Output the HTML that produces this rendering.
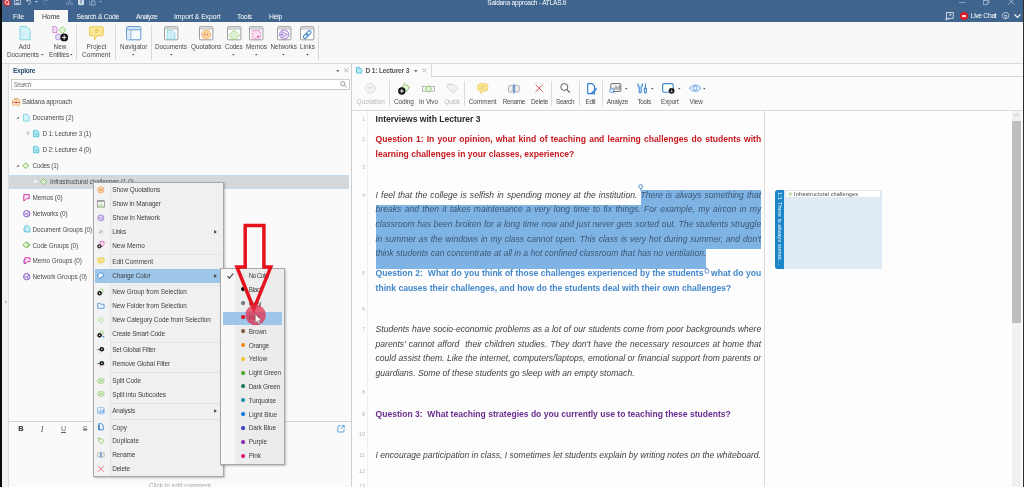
<!DOCTYPE html>
<html><head><meta charset="utf-8"><title>Saldana approach - ATLAS.ti</title>
<style>
html,body{margin:0;padding:0;width:1024px;height:487px;overflow:hidden;}
body{width:1024px;height:487px;overflow:hidden;position:relative;background:#f8f8f8;font-family:"Liberation Sans",sans-serif;font-size:7px;color:#444;}
.a{position:absolute;}
.t{position:absolute;white-space:nowrap;}
.d{position:absolute;left:375.6px;width:385.6px;white-space:nowrap;font-size:8.55px;line-height:12px;height:12px;text-align:justify;text-align-last:justify;color:#333;}
.d.l{text-align:left;text-align-last:left;}
.b{font-weight:bold;}
.i{font-style:italic;}
svg{position:absolute;overflow:visible;}
#root{position:absolute;left:0;top:0;width:1024px;height:487px;filter:blur(0.6px);will-change:transform;}
#clip{position:absolute;left:0;top:0;width:1024px;height:487px;overflow:hidden;}
</style></head><body><div id="clip"><div id="root">
<div class="a" style="left:-6px;top:-6px;width:1036px;height:28.2px;background:#3f648d;"></div>
<div class="a" style="left:34px;top:10px;width:34px;height:13px;background:#f8f8f8;"></div>
<div class="a" style="left:-6px;top:22.2px;width:1036px;height:40.8px;background:#f8f8f8;"></div>
<div class="a" style="left:-6px;top:62.5px;width:1036px;height:1px;background:#d9d9d9;"></div>
<div class="t" style="top:11.7px;font-size:6.8px;line-height:10px;color:#fff;letter-spacing:0.011px;left:13.0px;">File</div>
<div class="t" style="top:11.7px;font-size:6.8px;line-height:10px;color:#333;letter-spacing:-0.034px;left:42.0px;">Home</div>
<div class="t" style="top:11.7px;font-size:6.8px;line-height:10px;color:#fff;letter-spacing:-0.278px;left:76.5px;">Search &amp; Code</div>
<div class="t" style="top:11.7px;font-size:6.8px;line-height:10px;color:#fff;letter-spacing:-0.384px;left:136.0px;">Analyze</div>
<div class="t" style="top:11.7px;font-size:6.8px;line-height:10px;color:#fff;letter-spacing:-0.049px;left:174.0px;">Import &amp; Export</div>
<div class="t" style="top:11.7px;font-size:6.8px;line-height:10px;color:#fff;letter-spacing:-0.175px;left:237.0px;">Tools</div>
<div class="t" style="top:11.7px;font-size:6.8px;line-height:10px;color:#fff;letter-spacing:-0.246px;left:269.0px;">Help</div>
<div class="t" style="top:-2.0px;font-size:6.6px;line-height:10px;color:#fff;letter-spacing:-0.219px;left:487.3px;">Saldana approach - ATLAS.ti</div>
<div class="t" style="top:11.4px;font-size:6.8px;line-height:10px;color:#fff;letter-spacing:-0.336px;left:970.7px;">Live Chat</div>
<div class="a" style="left:76px;top:25px;width:1px;height:35px;background:#d9d9dc;"></div>
<div class="a" style="left:115px;top:25px;width:1px;height:35px;background:#d9d9dc;"></div>
<div class="a" style="left:151px;top:25px;width:1px;height:35px;background:#d9d9dc;"></div>
<div class="a" style="left:318px;top:25px;width:1px;height:35px;background:#d9d9dc;"></div>
<div class="t" style="top:41.7px;font-size:6.4px;line-height:10px;color:#4c4c4c;left:18.8px;">Add</div>
<div class="t" style="top:49.7px;font-size:6.4px;line-height:10px;color:#4c4c4c;letter-spacing:-0.041px;left:7.0px;">Documents</div>
<div class="t" style="top:41.7px;font-size:6.4px;line-height:10px;color:#4c4c4c;left:53.6px;">New</div>
<div class="t" style="top:49.7px;font-size:6.4px;line-height:10px;color:#4c4c4c;letter-spacing:-0.123px;left:49.0px;">Entities</div>
<div class="t" style="top:41.7px;font-size:6.4px;line-height:10px;color:#4c4c4c;left:86.5px;">Project</div>
<div class="t" style="top:49.7px;font-size:6.4px;line-height:10px;color:#4c4c4c;letter-spacing:0.109px;left:82.0px;">Comment</div>
<div class="t" style="top:41.7px;font-size:6.4px;line-height:10px;color:#4c4c4c;letter-spacing:0.012px;left:120.0px;">Navigator</div>
<div class="t" style="top:41.7px;font-size:6.4px;line-height:10px;color:#4c4c4c;letter-spacing:-0.041px;left:155.0px;">Documents</div>
<div class="t" style="top:41.7px;font-size:6.4px;line-height:10px;color:#4c4c4c;letter-spacing:-0.045px;left:191.0px;">Quotations</div>
<div class="t" style="top:41.7px;font-size:6.4px;line-height:10px;color:#4c4c4c;letter-spacing:-0.200px;left:225.0px;">Codes</div>
<div class="t" style="top:41.7px;font-size:6.4px;line-height:10px;color:#4c4c4c;letter-spacing:0.004px;left:246.0px;">Memos</div>
<div class="t" style="top:41.7px;font-size:6.4px;line-height:10px;color:#4c4c4c;letter-spacing:-0.021px;left:270.5px;">Networks</div>
<div class="t" style="top:41.7px;font-size:6.4px;line-height:10px;color:#4c4c4c;letter-spacing:0.012px;left:300.0px;">Links</div>
<div class="a" style="left:8px;top:63.5px;width:1px;height:430px;background:#dedede;"></div>
<div class="a" style="left:9px;top:63.5px;width:342px;height:430px;background:#fafafa;"></div>
<div class="t" style="top:66.0px;font-size:6.6px;line-height:10px;color:#2c4a75;font-weight:bold;letter-spacing:-0.315px;left:13.0px;">Explore</div>
<div class="a" style="left:10.5px;top:78.8px;width:339px;height:11px;background:#ffffff;border:1px solid #cdcdcd;box-sizing:border-box;"></div>
<div class="t" style="top:79.8px;font-size:6.4px;line-height:10px;color:#777;font-style:italic;letter-spacing:-0.463px;left:13.5px;">Search</div>
<div class="t" style="top:96.7px;font-size:6.4px;line-height:10px;color:#4c4c4c;letter-spacing:-0.122px;left:22.0px;">Saldana approach</div>
<div class="t" style="top:112.9px;font-size:6.4px;line-height:10px;color:#4c4c4c;letter-spacing:-0.074px;left:32.5px;">Documents (2)</div>
<div class="t" style="top:128.8px;font-size:6.4px;line-height:10px;color:#4c4c4c;letter-spacing:-0.180px;left:42.5px;">D 1: Lecturer 3 (1)</div>
<div class="t" style="top:144.9px;font-size:6.4px;line-height:10px;color:#4c4c4c;letter-spacing:-0.180px;left:42.5px;">D 2: Lecturer 4 (0)</div>
<div class="t" style="top:160.7px;font-size:6.4px;line-height:10px;color:#4c4c4c;letter-spacing:-0.233px;left:32.5px;">Codes (1)</div>
<div class="a" style="left:9px;top:174.5px;width:340px;height:14px;background:#d5d8db;border-top:1px solid #c4dcee;border-bottom:1px solid #c4dcee;box-sizing:border-box;"></div>
<div class="t" style="top:176.9px;font-size:6.4px;line-height:10px;color:#4c4c4c;letter-spacing:-0.087px;left:50.0px;">Infrastructural challenges (1-0)</div>
<div class="t" style="top:192.7px;font-size:6.4px;line-height:10px;color:#4c4c4c;letter-spacing:-0.064px;left:32.5px;">Memos (0)</div>
<div class="t" style="top:208.6px;font-size:6.4px;line-height:10px;color:#4c4c4c;letter-spacing:-0.106px;left:32.5px;">Networks (0)</div>
<div class="t" style="top:224.6px;font-size:6.4px;line-height:10px;color:#4c4c4c;letter-spacing:-0.107px;left:32.5px;">Document Groups (0)</div>
<div class="t" style="top:240.5px;font-size:6.4px;line-height:10px;color:#4c4c4c;letter-spacing:-0.144px;left:32.5px;">Code Groups (0)</div>
<div class="t" style="top:256.4px;font-size:6.4px;line-height:10px;color:#4c4c4c;letter-spacing:-0.043px;left:32.5px;">Memo Groups (0)</div>
<div class="t" style="top:272.4px;font-size:6.4px;line-height:10px;color:#4c4c4c;letter-spacing:-0.074px;left:32.5px;">Network Groups (0)</div>
<div class="a" style="left:9px;top:421px;width:342px;height:1px;background:#d4d4d4;"></div>
<div class="t" style="top:423.7px;font-size:7.5px;line-height:10px;color:#333;font-weight:bold;left:18.3px;">B</div>
<div class="t" style="top:423.7px;font-size:8.5px;line-height:10px;color:#555;font-style:italic;left:40.8px;font-family:'Liberation Serif',serif;">I</div>
<div class="t" style="top:423.7px;font-size:7px;line-height:10px;color:#666;left:61.0px;text-decoration:underline;">U</div>
<div class="t" style="top:423.7px;font-size:7px;line-height:10px;color:#777;left:82.7px;text-decoration:line-through;">S</div>
<div class="t" style="top:481.0px;font-size:6.4px;line-height:10px;color:#aaa;letter-spacing:0.049px;left:148.8px;">Click to edit comment</div>
<div class="a" style="left:351px;top:63.5px;width:1px;height:430px;background:#cfcfcf;"></div>
<div class="a" style="left:352px;top:63.5px;width:678px;height:430px;background:#fbfbfb;"></div>
<div class="a" style="left:352px;top:76px;width:678px;height:1px;background:#d9d9d9;"></div>
<div class="a" style="left:352px;top:63.5px;width:79px;height:13.5px;background:#fbfbfb;border-right:1px solid #d9d9d9;"></div>
<div class="t" style="top:65.8px;font-size:6.6px;line-height:10px;color:#555;font-weight:bold;letter-spacing:-0.168px;left:365.5px;">D 1: Lecturer 3</div>
<div class="a" style="left:352px;top:109.5px;width:678px;height:1px;background:#dcdcdc;"></div>
<div class="a" style="left:389px;top:81px;width:1px;height:25px;background:#d9dae0;"></div>
<div class="a" style="left:464px;top:81px;width:1px;height:25px;background:#d9dae0;"></div>
<div class="a" style="left:551px;top:81px;width:1px;height:25px;background:#d9dae0;"></div>
<div class="a" style="left:578.5px;top:81px;width:1px;height:25px;background:#d9dae0;"></div>
<div class="a" style="left:602px;top:81px;width:1px;height:25px;background:#d9dae0;"></div>
<div class="t" style="top:96.5px;font-size:6.4px;line-height:10px;color:#b9b9b9;letter-spacing:0.072px;left:356.6px;">Quotation</div>
<div class="t" style="top:96.5px;font-size:6.4px;line-height:10px;color:#4c4c4c;letter-spacing:-0.097px;left:394.0px;">Coding</div>
<div class="t" style="top:96.5px;font-size:6.4px;line-height:10px;color:#4c4c4c;letter-spacing:-0.064px;left:419.0px;">In Vivo</div>
<div class="t" style="top:96.5px;font-size:6.4px;line-height:10px;color:#b9b9b9;letter-spacing:-0.152px;left:444.2px;">Quick</div>
<div class="t" style="top:96.5px;font-size:6.4px;line-height:10px;color:#4c4c4c;letter-spacing:0.037px;left:468.7px;">Comment</div>
<div class="t" style="top:96.5px;font-size:6.4px;line-height:10px;color:#4c4c4c;letter-spacing:-0.315px;left:502.7px;">Rename</div>
<div class="t" style="top:96.5px;font-size:6.4px;line-height:10px;color:#4c4c4c;letter-spacing:-0.250px;left:531.0px;">Delete</div>
<div class="t" style="top:96.5px;font-size:6.4px;line-height:10px;color:#4c4c4c;letter-spacing:-0.346px;left:556.0px;">Search</div>
<div class="t" style="top:96.5px;font-size:6.4px;line-height:10px;color:#4c4c4c;letter-spacing:-0.257px;left:585.4px;">Edit</div>
<div class="t" style="top:96.5px;font-size:6.4px;line-height:10px;color:#4c4c4c;letter-spacing:-0.195px;left:606.8px;">Analyze</div>
<div class="t" style="top:96.5px;font-size:6.4px;line-height:10px;color:#4c4c4c;letter-spacing:-0.268px;left:637.4px;">Tools</div>
<div class="t" style="top:96.5px;font-size:6.4px;line-height:10px;color:#4c4c4c;letter-spacing:-0.116px;left:661.0px;">Export</div>
<div class="t" style="top:96.5px;font-size:6.4px;line-height:10px;color:#4c4c4c;letter-spacing:-0.164px;left:689.6px;">View</div>
<div class="a" style="left:352px;top:110.5px;width:660px;height:383px;background:#fdfdfd;"></div>
<div class="a" style="left:367px;top:110.5px;width:1px;height:383px;background:#efefef;"></div>
<div class="a" style="left:764px;top:110.5px;width:1px;height:383px;background:#dcdcdc;"></div>
<div class="a" style="left:640.6px;top:190px;width:120.7px;height:15px;background:#7fb3e3;"></div>
<div class="a" style="left:375.5px;top:204.7px;width:385.8px;height:44.4px;background:#7fb3e3;"></div>
<div class="a" style="left:375.5px;top:248.8px;width:330.8px;height:20.3px;background:#7fb3e3;"></div>
<div class="t" style="top:114.4px;font-size:5.6px;line-height:10px;color:#b8b8b8;left:0.0px;left:auto;right:659px;">1</div>
<div class="d b l" style="top:113.0px;color:#2a2a2a;">Interviews with Lecturer 3</div>
<div class="t" style="top:134.4px;font-size:5.6px;line-height:10px;color:#b8b8b8;left:0.0px;left:auto;right:659px;">2</div>
<div class="d b" style="top:133.0px;color:#c8161f;">Question 1: In your opinion, what kind of teaching and learning challenges do students with</div>
<div class="d b l" style="top:147.8px;color:#c8161f;">learning challenges in your classes, experience?</div>
<div class="t" style="top:162.4px;font-size:5.6px;line-height:10px;color:#b8b8b8;left:0.0px;left:auto;right:659px;">3</div>
<div class="t" style="top:189.9px;font-size:5.6px;line-height:10px;color:#b8b8b8;left:0.0px;left:auto;right:659px;">4</div>
<div class="d i" style="top:188.5px;color:#424242;">I feel that the college is selfish in spending money at the institution. <span style="color:#3c5876">There is always something that</span></div>
<div class="d i" style="top:203.2px;color:#3c5876;">breaks and then it takes maintenance a very long time to fix things. For example, my aircon in my</div>
<div class="d i" style="top:218.0px;color:#3c5876;">classroom has been broken for a long time now and just never gets sorted out. The students struggle</div>
<div class="d i" style="top:232.7px;color:#3c5876;">in summer as the windows in my class cannot open. This class is very hot during summer, and don&#39;t</div>
<div class="d i l" style="top:247.4px;color:#3c5876;">think students can concentrate at all in a hot confined classroom that has no ventilation.</div>
<div class="t" style="top:268.4px;font-size:5.6px;line-height:10px;color:#b8b8b8;left:0.0px;left:auto;right:659px;">5</div>
<div class="d b" style="top:267.0px;color:#4288cc;">Question 2: &nbsp;What do you think of those challenges experienced by the students &nbsp;&nbsp;what do you</div>
<div class="d b l" style="top:281.7px;color:#4288cc;">think causes their challenges, and how do the students deal with their own challenges?</div>
<div class="t" style="top:304.4px;font-size:5.6px;line-height:10px;color:#b8b8b8;left:0.0px;left:auto;right:659px;">6</div>
<div class="t" style="top:324.4px;font-size:5.6px;line-height:10px;color:#b8b8b8;left:0.0px;left:auto;right:659px;">7</div>
<div class="d i" style="top:323.0px;color:#424242;">Students have socio-economic problems as a lot of our students come from poor backgrounds where</div>
<div class="d i" style="top:337.8px;color:#424242;">parents&#39; cannot afford &nbsp;their children studies. They don&#39;t have the necessary resources at home that</div>
<div class="d i" style="top:352.2px;color:#424242;">could assist them. Like the internet, computers/laptops, emotional or financial support from parents or</div>
<div class="d i l" style="top:366.8px;color:#424242;">guardians. Some of these students go sleep with an empty stomach.</div>
<div class="t" style="top:387.4px;font-size:5.6px;line-height:10px;color:#b8b8b8;left:0.0px;left:auto;right:659px;">8</div>
<div class="t" style="top:408.9px;font-size:5.6px;line-height:10px;color:#b8b8b8;left:0.0px;left:auto;right:659px;">9</div>
<div class="d b l" style="top:407.5px;color:#6b2d90;">Question 3: &nbsp;What teaching strategies do you currently use to teaching these students?</div>
<div class="t" style="top:429.0px;font-size:5.6px;line-height:10px;color:#b8b8b8;left:0.0px;left:auto;right:659px;">10</div>
<div class="t" style="top:450.0px;font-size:5.6px;line-height:10px;color:#b8b8b8;left:0.0px;left:auto;right:659px;">11</div>
<div class="d i l" style="top:448.6px;color:#424242;">I encourage participation in class, I sometimes let students explain by writing notes on the whiteboard.</div>
<div class="t" style="top:466.0px;font-size:5.6px;line-height:10px;color:#b8b8b8;left:0.0px;left:auto;right:659px;">12</div>
<div class="t" style="top:481.4px;font-size:5.6px;line-height:10px;color:#b8b8b8;left:0.0px;left:auto;right:659px;">13</div>
<div class="a" style="left:774.6px;top:189.5px;width:9px;height:79.5px;background:#1c86c9;border-radius:2.5px 0 0 2.5px;"></div>
<div class="a" style="left:783.5px;top:189.5px;width:98.5px;height:79.5px;background:#dfeaf5;"></div>
<div class="a" style="left:785px;top:190.3px;width:95.5px;height:8px;background:#ffffff;border:0.5px solid #e2e6ea;box-sizing:border-box;"></div>
<div class="t" style="top:189.2px;font-size:5.5px;line-height:10px;color:#444;letter-spacing:0.098px;left:794.0px;">Infrastructural challenges</div>
<div class="t" style="left:774.8px;top:192.4px;width:76px;height:8.6px;font-size:6.0px;line-height:8.6px;color:#f4f9fd;transform-origin:0 0;transform:rotate(90deg) translate(0,-8.6px);letter-spacing:-0.080px;">1:1 There is always somet…</div>
<div class="a" style="left:1012px;top:110.5px;width:10.8px;height:383px;background:#fdfdfd;"></div>
<div class="a" style="left:1012px;top:110.5px;width:8.6px;height:383px;background:#f1f1f1;"></div>
<div class="a" style="left:1012px;top:120.5px;width:8.6px;height:202.3px;background:#bebebe;"></div>
<div class="a" style="left:1022.8px;top:-6px;width:7.2px;height:499px;background:#2e2e2e;"></div>
<div class="a" style="left:-6px;top:-6px;width:8.2px;height:499px;background:#0d0d0d;"></div>
<div class="a" style="left:2.2px;top:63.5px;width:6px;height:430px;background:#f3f3f3;"></div>
<div class="a" style="left:93px;top:182.4px;width:131px;height:294.6px;background:#f0f0f0;border:1px solid #a8a8a8;box-sizing:border-box;box-shadow:1px 1px 2px rgba(0,0,0,0.25);"></div>
<div class="a" style="left:94px;top:183.4px;width:15.5px;height:292.6px;background:#f3f3f3;border-right:1px solid #e4e4e4;"></div>
<div class="a" style="left:94.8px;top:268.8px;width:125px;height:13.8px;background:#9dc6ea;"></div>
<div class="a" style="left:111px;top:253.5px;width:110px;height:1px;background:#e4e4e4;"></div>
<div class="a" style="left:111px;top:285px;width:110px;height:1px;background:#e4e4e4;"></div>
<div class="a" style="left:111px;top:342px;width:110px;height:1px;background:#e4e4e4;"></div>
<div class="a" style="left:111px;top:371.8px;width:110px;height:1px;background:#e4e4e4;"></div>
<div class="a" style="left:111px;top:402.7px;width:110px;height:1px;background:#e4e4e4;"></div>
<div class="a" style="left:111px;top:419px;width:110px;height:1px;background:#e4e4e4;"></div>
<div class="t" style="top:185.4px;font-size:6.4px;line-height:10px;color:#404040;letter-spacing:-0.049px;left:112.2px;">Show Quotations</div>
<div class="t" style="top:198.9px;font-size:6.4px;line-height:10px;color:#404040;letter-spacing:-0.067px;left:112.2px;">Show in Manager</div>
<div class="t" style="top:213.0px;font-size:6.4px;line-height:10px;color:#404040;letter-spacing:-0.014px;left:112.2px;">Show in Network</div>
<div class="t" style="top:226.9px;font-size:6.4px;line-height:10px;color:#404040;letter-spacing:-0.228px;left:112.2px;">Links</div>
<div class="t" style="top:240.7px;font-size:6.4px;line-height:10px;color:#404040;letter-spacing:0.055px;left:112.2px;">New Memo</div>
<div class="t" style="top:256.7px;font-size:6.4px;line-height:10px;color:#404040;letter-spacing:0.021px;left:112.2px;">Edit Comment</div>
<div class="t" style="top:270.9px;font-size:6.4px;line-height:10px;color:#404040;letter-spacing:-0.099px;left:112.2px;">Change Color</div>
<div class="t" style="top:287.4px;font-size:6.4px;line-height:10px;color:#404040;letter-spacing:-0.010px;left:112.2px;">New Group from Selection</div>
<div class="t" style="top:301.0px;font-size:6.4px;line-height:10px;color:#404040;letter-spacing:-0.024px;left:112.2px;">New Folder from Selection</div>
<div class="t" style="top:314.9px;font-size:6.4px;line-height:10px;color:#404040;letter-spacing:-0.047px;left:112.2px;">New Category Code from Selection</div>
<div class="t" style="top:328.9px;font-size:6.4px;line-height:10px;color:#404040;letter-spacing:-0.137px;left:112.2px;">Create Smart Code</div>
<div class="t" style="top:345.2px;font-size:6.4px;line-height:10px;color:#404040;letter-spacing:-0.152px;left:112.2px;">Set Global Filter</div>
<div class="t" style="top:359.0px;font-size:6.4px;line-height:10px;color:#404040;letter-spacing:-0.115px;left:112.2px;">Remove Global Filter</div>
<div class="t" style="top:375.9px;font-size:6.4px;line-height:10px;color:#404040;letter-spacing:-0.073px;left:112.2px;">Split Code</div>
<div class="t" style="top:389.6px;font-size:6.4px;line-height:10px;color:#404040;letter-spacing:-0.052px;left:112.2px;">Split into Subcodes</div>
<div class="t" style="top:406.1px;font-size:6.4px;line-height:10px;color:#404040;letter-spacing:-0.129px;left:112.2px;">Analysis</div>
<div class="t" style="top:422.7px;font-size:6.4px;line-height:10px;color:#404040;letter-spacing:-0.035px;left:112.2px;">Copy</div>
<div class="t" style="top:436.1px;font-size:6.4px;line-height:10px;color:#404040;letter-spacing:0.013px;left:112.2px;">Duplicate</div>
<div class="t" style="top:449.9px;font-size:6.4px;line-height:10px;color:#404040;letter-spacing:-0.232px;left:112.2px;">Rename</div>
<div class="t" style="top:463.8px;font-size:6.4px;line-height:10px;color:#404040;letter-spacing:-0.117px;left:112.2px;">Delete</div>
<svg style="left:214.20000000000002px;top:229.6px" width="3" height="3.8" viewBox="0 0 3 3.8"><path d="M0.2 0 L2.8 1.9 L0.2 3.8 Z" fill="#3a3a3a"/></svg>
<svg style="left:214.20000000000002px;top:273.6px" width="3" height="3.8" viewBox="0 0 3 3.8"><path d="M0.2 0 L2.8 1.9 L0.2 3.8 Z" fill="#3a3a3a"/></svg>
<svg style="left:214.20000000000002px;top:408.8px" width="3" height="3.8" viewBox="0 0 3 3.8"><path d="M0.2 0 L2.8 1.9 L0.2 3.8 Z" fill="#3a3a3a"/></svg>
<div class="a" style="left:220px;top:268.2px;width:65px;height:197px;background:#ececec;border:1px solid #a8a8a8;box-sizing:border-box;box-shadow:1px 1px 2px rgba(0,0,0,0.25);"></div>
<div class="a" style="left:221px;top:269.2px;width:13.6px;height:195px;background:#f8f8f8;"></div>
<div class="a" style="left:222.5px;top:311.6px;width:59.5px;height:13px;background:#9dc6ea;"></div>
<div class="t" style="top:270.9px;font-size:6.4px;line-height:10px;color:#404040;letter-spacing:-0.619px;left:248.7px;">No Color</div>
<svg style="left:241px;top:273.6px" width="3.8" height="3.8" viewBox="0 0 3.8 3.8"><circle cx="1.9" cy="1.9" r="1.5" fill="#fff" stroke="#bbb" stroke-width="0.6"/></svg>
<div class="t" style="top:284.7px;font-size:6.4px;line-height:10px;color:#404040;letter-spacing:-0.270px;left:248.7px;">Black</div>
<svg style="left:240.8px;top:287.2px" width="4.2" height="4.2" viewBox="0 0 4.2 4.2"><circle cx="2.1" cy="2.1" r="2.1" fill="#111"/></svg>
<div class="t" style="top:298.9px;font-size:6.4px;line-height:10px;color:#404040;letter-spacing:-0.392px;left:248.7px;">Grey</div>
<svg style="left:240.8px;top:301.4px" width="4.2" height="4.2" viewBox="0 0 4.2 4.2"><circle cx="2.1" cy="2.1" r="2.1" fill="#777"/></svg>
<div class="t" style="top:312.9px;font-size:6.4px;line-height:10px;color:#404040;letter-spacing:-0.480px;left:248.7px;">Red</div>
<svg style="left:240.8px;top:315.4px" width="4.2" height="4.2" viewBox="0 0 4.2 4.2"><circle cx="2.1" cy="2.1" r="2.1" fill="#d01020"/></svg>
<div class="t" style="top:326.7px;font-size:6.4px;line-height:10px;color:#404040;letter-spacing:-0.068px;left:248.7px;">Brown</div>
<svg style="left:240.8px;top:329.2px" width="4.2" height="4.2" viewBox="0 0 4.2 4.2"><circle cx="2.1" cy="2.1" r="2.1" fill="#8a5a44"/></svg>
<div class="t" style="top:340.7px;font-size:6.4px;line-height:10px;color:#404040;letter-spacing:-0.174px;left:248.7px;">Orange</div>
<svg style="left:240.8px;top:343.2px" width="4.2" height="4.2" viewBox="0 0 4.2 4.2"><circle cx="2.1" cy="2.1" r="2.1" fill="#f08a1c"/></svg>
<div class="t" style="top:354.3px;font-size:6.4px;line-height:10px;color:#404040;letter-spacing:0.089px;left:248.7px;">Yellow</div>
<svg style="left:240.8px;top:356.79999999999995px" width="4.2" height="4.2" viewBox="0 0 4.2 4.2"><circle cx="2.1" cy="2.1" r="2.1" fill="#f1c232"/></svg>
<div class="t" style="top:368.0px;font-size:6.4px;line-height:10px;color:#404040;letter-spacing:-0.104px;left:248.7px;">Light Green</div>
<svg style="left:240.8px;top:370.5px" width="4.2" height="4.2" viewBox="0 0 4.2 4.2"><circle cx="2.1" cy="2.1" r="2.1" fill="#4ea72e"/></svg>
<div class="t" style="top:381.9px;font-size:6.4px;line-height:10px;color:#404040;letter-spacing:-0.178px;left:248.7px;">Dark Green</div>
<svg style="left:240.8px;top:384.4px" width="4.2" height="4.2" viewBox="0 0 4.2 4.2"><circle cx="2.1" cy="2.1" r="2.1" fill="#1d7a50"/></svg>
<div class="t" style="top:395.9px;font-size:6.4px;line-height:10px;color:#404040;letter-spacing:-0.102px;left:248.7px;">Turquoise</div>
<svg style="left:240.8px;top:398.4px" width="4.2" height="4.2" viewBox="0 0 4.2 4.2"><circle cx="2.1" cy="2.1" r="2.1" fill="#1f93a8"/></svg>
<div class="t" style="top:409.6px;font-size:6.4px;line-height:10px;color:#404040;letter-spacing:-0.016px;left:248.7px;">Light Blue</div>
<svg style="left:240.8px;top:412.09999999999997px" width="4.2" height="4.2" viewBox="0 0 4.2 4.2"><circle cx="2.1" cy="2.1" r="2.1" fill="#1478d8"/></svg>
<div class="t" style="top:423.4px;font-size:6.4px;line-height:10px;color:#404040;letter-spacing:-0.089px;left:248.7px;">Dark Blue</div>
<svg style="left:240.8px;top:425.9px" width="4.2" height="4.2" viewBox="0 0 4.2 4.2"><circle cx="2.1" cy="2.1" r="2.1" fill="#3b3fc0"/></svg>
<div class="t" style="top:437.3px;font-size:6.4px;line-height:10px;color:#404040;letter-spacing:-0.033px;left:248.7px;">Purple</div>
<svg style="left:240.8px;top:439.79999999999995px" width="4.2" height="4.2" viewBox="0 0 4.2 4.2"><circle cx="2.1" cy="2.1" r="2.1" fill="#8a2fb0"/></svg>
<div class="t" style="top:451.1px;font-size:6.4px;line-height:10px;color:#404040;letter-spacing:-0.037px;left:248.7px;">Pink</div>
<svg style="left:240.8px;top:453.59999999999997px" width="4.2" height="4.2" viewBox="0 0 4.2 4.2"><circle cx="2.1" cy="2.1" r="2.1" fill="#d81b7a"/></svg>
<svg style="left:226.5px;top:272.5px" width="7" height="6" viewBox="0 0 7 6"><path d="M0.5 3.2 L2.4 5.2 L6.3 0.6" fill="none" stroke="#444" stroke-width="1.1"/></svg>
<svg style="left:0px;top:0px" width="1024" height="487" viewBox="0 0 1024 487"><path d="M245.2 225.6 H263.9 V267.1 H270.7 L253.85 309 L237 267.1 H245.2 Z" fill="none" stroke="#e6121b" stroke-width="3.5" stroke-linejoin="miter"/><circle cx="255.6" cy="315" r="10.3" fill="#e0304c" fill-opacity="0.74"/><path d="M255.4 314.4 L255.4 322.6 L257.3 320.9 L258.7 323.8 L260 323.2 L258.6 320.4 L261.2 320.3 Z" fill="#fff" stroke="#666" stroke-width="0.4"/></svg>
<svg style="left:3px;top:-1px" width="8" height="8" viewBox="0 0 8 8"><circle cx="4" cy="3.6" r="3.6" fill="#d8232a"/><circle cx="4" cy="3.4" r="1.9" fill="none" stroke="#fff" stroke-width="0.9"/><path d="M4.6 4.4 L6.2 6" stroke="#fff" stroke-width="0.9"/></svg>
<svg style="left:14px;top:-1px" width="7" height="7" viewBox="0 0 7 7"><path d="M0.4 0 H5.4 L6.4 1 V5.6 H0.4 Z" fill="none" stroke="#d3ddea" stroke-width="0.8"/><rect x="1.8" y="0" width="2.8" height="2" fill="#d3ddea"/><rect x="1.6" y="3.4" width="3.6" height="2.2" fill="#d3ddea" fill-opacity="0.7"/></svg>
<svg style="left:26px;top:-1px" width="6" height="6" viewBox="0 0 6 6"><path d="M0.6 1.2 L2.6 0.2 M0.6 1.2 L2 3 M0.6 1.2 C3.5 0.6 5.2 2 4.6 3.6 C4.2 4.6 3.2 5.2 2 5.4" fill="none" stroke="#d3ddea" stroke-width="0.85"/></svg>
<svg style="left:35px;top:1px" width="3" height="2" viewBox="0 0 3 2"><path d="M0 0 H3 L1.5 1.6 Z" fill="#d3ddea"/></svg>
<svg style="left:42px;top:-1px" width="6" height="6" viewBox="0 0 6 6"><path d="M5.4 1.2 L3.4 0.2 M5.4 1.2 L4 3 M5.4 1.2 C2.5 0.6 0.8 2 1.4 3.6 C1.8 4.6 2.8 5.2 4 5.4" fill="none" stroke="#6f8db3" stroke-width="0.85"/></svg>
<svg style="left:66px;top:-1px" width="7" height="7" viewBox="0 0 7 7"><path d="M2 0 L4.6 4 M5 0 L2.4 4" stroke="#7f9bbd" stroke-width="0.8"/><circle cx="1.6" cy="4.8" r="1.2" fill="none" stroke="#7f9bbd" stroke-width="0.8"/><circle cx="5.4" cy="4.8" r="1.2" fill="none" stroke="#7f9bbd" stroke-width="0.8"/></svg>
<svg style="left:77.5px;top:-1px" width="6" height="7" viewBox="0 0 6 7"><rect x="0.5" y="0.2" width="5" height="5.6" rx="0.8" fill="#dfe6ef" stroke="#eef2f7" stroke-width="0.7"/><rect x="1.9" y="0" width="2.2" height="4.6" fill="#8fa8c6"/></svg>
<svg style="left:89px;top:-1px" width="7" height="7" viewBox="0 0 7 7"><path d="M0.5 0.5 H3.6 V6 H0.5 Z" fill="none" stroke="#7f9bbd" stroke-width="0.8"/><path d="M2.6 2 H6 V6.2 H2.6 Z" fill="#3e6491" stroke="#a9bcd4" stroke-width="0.8"/></svg>
<svg style="left:99px;top:1px" width="3" height="2" viewBox="0 0 3 2"><path d="M0 0 H3 L1.5 1.6 Z" fill="#8fa8c6"/></svg>
<svg style="left:959px;top:2px" width="7" height="1" viewBox="0 0 7 1"><path d="M0 0.5 H6.5" stroke="#8ea6c4" stroke-width="0.9"/></svg>
<svg style="left:983px;top:-1px" width="7" height="6" viewBox="0 0 7 6"><rect x="0.5" y="1.6" width="4.2" height="3.8" fill="none" stroke="#a9bcd4" stroke-width="0.8"/><path d="M1.8 1.4 V0.2 H6 V4 H5" fill="none" stroke="#a9bcd4" stroke-width="0.8"/></svg>
<svg style="left:1007.5px;top:-1px" width="7" height="7" viewBox="0 0 7 7"><path d="M0.3 -0.5 L6.3 5.7 M6.3 -0.5 L0.3 5.7" stroke="#a9bcd4" stroke-width="0.85"/></svg>
<svg style="left:944.5px;top:11.5px" width="9" height="9" viewBox="0 0 9 9"><rect x="1.6" y="0.5" width="6.6" height="5.8" fill="none" stroke="#e6ecf4" stroke-width="0.8"/><path d="M4 2 H6 V4 M6 2 L4.2 4" stroke="#e6ecf4" stroke-width="0.6" fill="none"/><path d="M0.4 7.2 H4.6 M0.4 7.2 L1.6 6.2 M0.4 7.2 L1.6 8.2" stroke="#e6ecf4" stroke-width="0.7" fill="none"/></svg>
<svg style="left:960px;top:12px" width="8" height="8" viewBox="0 0 8 8"><circle cx="4" cy="4" r="3.9" fill="#dd1a22"/><path d="M2.2 2.9 H5.9 V4.9 H3.6 L2.6 5.8 V4.9 H2.2 Z" fill="#fff" fill-opacity="0.9"/></svg>
<svg style="left:1001.8px;top:12.4px" width="7.2" height="7.2" viewBox="0 0 7.2 7.2"><circle cx="3.6" cy="3.6" r="3.2" fill="none" stroke="#e6ecf4" stroke-width="0.7"/></svg>
<div class="t" style="top:11.5px;font-size:5.6px;line-height:10px;color:#e6ecf4;font-weight:bold;left:1003.7px;">?</div>
<svg style="left:1013.5px;top:14px" width="7" height="4" viewBox="0 0 7 4"><path d="M0.5 0.4 L3.5 3.4 L6.5 0.4" fill="none" stroke="#fff" stroke-width="1.2"/></svg>
<svg style="left:18.5px;top:26px" width="12" height="14.5" viewBox="0 0 12 14.5"><path d="M1 0.6 H7.6 L11.2 4.2 V13.8 H1 Z" fill="#d3f2f8" stroke="#52c3dc" stroke-width="0.9" stroke-dasharray="1.2 0.5"/></svg>
<svg style="left:40.7px;top:53.800000000000004px" width="2.6" height="1.6" viewBox="0 0 2.6 1.6"><path d="M0 0 H2.6 L1.3 1.6 Z" fill="#555"/></svg>
<svg style="left:52px;top:26px" width="17" height="16" viewBox="0 0 17 16"><path d="M0.8 0.6 H3.6 L5 2 V6.6 H0.8 Z" fill="#f1dff5" stroke="#c06ac9" stroke-width="0.7"/><path d="M10.4 0.6 L14 4 L10.4 7.6 L6.8 4 Z" fill="#dff2d6" stroke="#7ec35e" stroke-width="0.7"/><circle cx="6.4" cy="11" r="2.9" fill="#e4dcf4" stroke="#9a7bd1" stroke-width="0.7"/><circle cx="12.2" cy="11.4" r="3.9" fill="#151515"/><path d="M12.2 9.2 V13.6 M10 11.4 H14.4" stroke="#fff" stroke-width="0.9"/></svg>
<svg style="left:70.2px;top:53.800000000000004px" width="2.6" height="1.6" viewBox="0 0 2.6 1.6"><path d="M0 0 H2.6 L1.3 1.6 Z" fill="#555"/></svg>
<svg style="left:89px;top:26px" width="15" height="15" viewBox="0 0 15 15"><path d="M1.4 0.8 H13.4 Q14.2 0.8 14.2 1.6 V9 Q14.2 9.8 13.4 9.8 H8.4 L5.6 13.6 V9.8 H1.4 Q0.6 9.8 0.6 9 V1.6 Q0.6 0.8 1.4 0.8 Z" fill="#f9e79a" stroke="#e9c43c" stroke-width="0.9"/><path d="M6 4.2 H10 M6 6.2 H8.6" stroke="#e3b52a" stroke-width="0.9"/></svg>
<svg style="left:126px;top:26px" width="15.5" height="14.5" viewBox="0 0 15.5 14.5"><rect x="0.6" y="0.6" width="14.2" height="13.2" rx="1" fill="#f4f9fd" stroke="#5a93cf" stroke-width="1"/><rect x="1" y="1" width="13.4" height="2.6" fill="#cfe3f6"/><path d="M0.6 3.8 H14.8 M4.8 3.8 V13.8" stroke="#5a93cf" stroke-width="0.9"/><rect x="1.1" y="4.2" width="3.3" height="9.2" fill="#dcebf8"/></svg>
<svg style="left:132.2px;top:53.6px" width="2.6" height="1.6" viewBox="0 0 2.6 1.6"><path d="M0 0 H2.6 L1.3 1.6 Z" fill="#555"/></svg>
<svg style="left:164px;top:26px" width="14.5" height="14.5" viewBox="0 0 14.5 14.5"><rect x="0.5" y="0.7" width="13.4" height="13.1" rx="0.9" fill="#fcfcfc" stroke="#858585" stroke-width="0.8"/><rect x="0.9" y="1.1" width="12.6" height="1.7" fill="#dadada"/><path d="M0.6 3 H13.8" stroke="#8c8c8c" stroke-width="0.5"/><path d="M3.2 4.4 H8 Q10.8 5.2 11 8 V13.3 H3.2 Z" fill="#cfeff7" stroke="#5cc7de" stroke-width="0.8" stroke-dasharray="1.1 0.5"/></svg>
<svg style="left:199px;top:26px" width="14.5" height="14.5" viewBox="0 0 14.5 14.5"><rect x="0.5" y="0.7" width="13.4" height="13.1" rx="0.9" fill="#fcfcfc" stroke="#858585" stroke-width="0.8"/><rect x="0.9" y="1.1" width="12.6" height="1.7" fill="#dadada"/><path d="M0.6 3 H13.8" stroke="#8c8c8c" stroke-width="0.5"/><circle cx="7.2" cy="8.6" r="4.5" fill="#fbd9a5" stroke="#ee8a4a" stroke-width="0.8" stroke-dasharray="1 0.5"/><circle cx="7.2" cy="8.6" r="2.6" fill="#fbe6c0" stroke="#f1b24a" stroke-width="0.5"/><path d="M6 7.6 V9.4 M8.2 7.6 V9.4" stroke="#d9463a" stroke-width="1"/></svg>
<svg style="left:226.5px;top:26px" width="14.5" height="14.5" viewBox="0 0 14.5 14.5"><rect x="0.5" y="0.7" width="13.4" height="13.1" rx="0.9" fill="#fcfcfc" stroke="#858585" stroke-width="0.8"/><rect x="0.9" y="1.1" width="12.6" height="1.7" fill="#dadada"/><path d="M0.6 3 H13.8" stroke="#8c8c8c" stroke-width="0.5"/><path d="M7.2 4 L12.6 9.2 L8.8 13.3 H5.6 L1.8 9.2 Z" fill="#dcf0d2" stroke="#86c768" stroke-width="0.8" stroke-dasharray="1 0.4"/></svg>
<svg style="left:249.3px;top:26px" width="14.5" height="14.5" viewBox="0 0 14.5 14.5"><rect x="0.5" y="0.7" width="13.4" height="13.1" rx="0.9" fill="#fcfcfc" stroke="#858585" stroke-width="0.8"/><rect x="0.9" y="1.1" width="12.6" height="1.7" fill="#dadada"/><path d="M0.6 3 H13.8" stroke="#8c8c8c" stroke-width="0.5"/><rect x="3.2" y="4.6" width="8.2" height="7.8" rx="1.2" fill="#fbdff0" stroke="#dd5cb8" stroke-width="0.8" stroke-dasharray="1 0.5"/><path d="M8 10.6 H10" stroke="#c7257f" stroke-width="1"/></svg>
<svg style="left:277px;top:26px" width="14.5" height="14.5" viewBox="0 0 14.5 14.5"><rect x="0.5" y="0.7" width="13.4" height="13.1" rx="0.9" fill="#fcfcfc" stroke="#858585" stroke-width="0.8"/><rect x="0.9" y="1.1" width="12.6" height="1.7" fill="#dadada"/><path d="M0.6 3 H13.8" stroke="#8c8c8c" stroke-width="0.5"/><circle cx="7.2" cy="8.5" r="4.6" fill="#ebe3f7" stroke="#8b63c7" stroke-width="0.8"/><path d="M5 5.8 L10.4 8.5 L5 11.2 Z" fill="#f4effb" stroke="#9a78d0" stroke-width="0.7"/><path d="M2.8 8.5 H7" stroke="#8b63c7" stroke-width="0.6"/></svg>
<svg style="left:300px;top:26px" width="14.5" height="14.5" viewBox="0 0 14.5 14.5"><rect x="0.5" y="0.7" width="13.4" height="13.1" rx="0.9" fill="#fcfcfc" stroke="#858585" stroke-width="0.8"/><rect x="0.9" y="1.1" width="12.6" height="1.7" fill="#dadada"/><path d="M0.6 3 H13.8" stroke="#8c8c8c" stroke-width="0.5"/><g transform="rotate(-45 7.2 8.6)" fill="none" stroke="#4a8acb" stroke-width="1.1"><rect x="2.4" y="7" width="5.6" height="3.2" rx="1.6"/><rect x="6.4" y="7" width="5.6" height="3.2" rx="1.6"/></g></svg>
<svg style="left:170.0px;top:53.6px" width="2.6" height="1.6" viewBox="0 0 2.6 1.6"><path d="M0 0 H2.6 L1.3 1.6 Z" fill="#555"/></svg>
<svg style="left:232.39999999999998px;top:53.6px" width="2.6" height="1.6" viewBox="0 0 2.6 1.6"><path d="M0 0 H2.6 L1.3 1.6 Z" fill="#555"/></svg>
<svg style="left:255.2px;top:53.6px" width="2.6" height="1.6" viewBox="0 0 2.6 1.6"><path d="M0 0 H2.6 L1.3 1.6 Z" fill="#555"/></svg>
<svg style="left:282.0px;top:53.6px" width="2.6" height="1.6" viewBox="0 0 2.6 1.6"><path d="M0 0 H2.6 L1.3 1.6 Z" fill="#555"/></svg>
<svg style="left:305.9px;top:53.6px" width="2.6" height="1.6" viewBox="0 0 2.6 1.6"><path d="M0 0 H2.6 L1.3 1.6 Z" fill="#555"/></svg>
<svg style="left:12px;top:97.5px" width="8.5" height="8" viewBox="0 0 8.5 8"><path d="M2.6 1.8 V0.6 H5.8 V1.8" fill="none" stroke="#c98a2b" stroke-width="0.7"/><rect x="0.5" y="1.8" width="7.4" height="5.4" rx="0.8" fill="#fdf0d8" stroke="#e39a3c" stroke-width="0.7"/><path d="M0.5 4.4 H7.9" stroke="#d8453a" stroke-width="0.8"/><rect x="3.4" y="3.6" width="1.6" height="1.6" fill="#d8453a"/></svg>
<svg style="left:16px;top:116.3px" width="3.2" height="3.2" viewBox="0 0 3.2 3.2"><path d="M3 0.2 V3 H0.2 Z" fill="#8c8c8c"/></svg>
<svg style="left:23px;top:113.8px" width="7" height="7.6" viewBox="0 0 7 7.6"><path d="M0.5 0.4 H4.2 L6.3 2.5 V7.1 H0.5 Z" fill="#d6f3f9" stroke="#5fc9e0" stroke-width="0.7"/></svg>
<svg style="left:27.4px;top:131.4px" width="3" height="4" viewBox="0 0 3 4"><path d="M0.4 0.3 L2.6 2 L0.4 3.7 Z" fill="#fff" stroke="#888" stroke-width="0.5"/></svg>
<svg style="left:33px;top:129.8px" width="6.4" height="7.4" viewBox="0 0 6.4 7.4"><path d="M0.5 0.4 H4 L5.9 2.3 V6.9 H0.5 Z" fill="#a8e3f0" stroke="#3fb9d6" stroke-width="0.7"/><path d="M1.6 4.4 H4.6" stroke="#3fb9d6" stroke-width="0.6"/></svg>
<svg style="left:33px;top:145.9px" width="6.4" height="7.4" viewBox="0 0 6.4 7.4"><path d="M0.5 0.4 H4 L5.9 2.3 V6.9 H0.5 Z" fill="#a8e3f0" stroke="#3fb9d6" stroke-width="0.7"/><path d="M1.6 4.4 H4.6" stroke="#3fb9d6" stroke-width="0.6"/></svg>
<svg style="left:16px;top:164.1px" width="3.2" height="3.2" viewBox="0 0 3.2 3.2"><path d="M3 0.2 V3 H0.2 Z" fill="#8c8c8c"/></svg>
<svg style="left:22.4px;top:161.70000000000002px" width="7.4" height="7.4" viewBox="0 0 7.4 7.4"><path d="M3.7 0.7 L6.7 3.7 L3.7 6.7 L0.7 3.7 Z" fill="#e6f4dd" stroke="#7dbd55" stroke-width="1" stroke-linejoin="round"/></svg>
<svg style="left:33.5px;top:180px" width="3" height="3" viewBox="0 0 3 3"><circle cx="1.5" cy="1.5" r="1.3" fill="#fff" stroke="#e6e6e6" stroke-width="0.3"/></svg>
<svg style="left:40px;top:177.9px" width="7.4" height="7.4" viewBox="0 0 7.4 7.4"><path d="M3.7 0.7 L6.7 3.7 L3.7 6.7 L0.7 3.7 Z" fill="#e6f4dd" stroke="#7dbd55" stroke-width="1" stroke-linejoin="round"/></svg>
<svg style="left:23px;top:193.70000000000002px" width="7" height="7.4" viewBox="0 0 7 7.4"><path d="M0.8 0.6 H6.2 V4.6 H3.8 L0.8 7 Z" fill="#fde8f5" stroke="#cf3fa2" stroke-width="1" stroke-linejoin="round"/></svg>
<svg style="left:22.5px;top:209.5px" width="7.4" height="7.4" viewBox="0 0 7.4 7.4"><circle cx="3.7" cy="3.7" r="3.2" fill="#ebe3f7" stroke="#8b63c7" stroke-width="1"/><path d="M1 3.9 H4.2 L6 2 M4.2 3.9 L5.6 6" stroke="#8b63c7" stroke-width="0.8" fill="none"/></svg>
<svg style="left:22.5px;top:225.2px" width="8" height="8" viewBox="0 0 8 8"><path d="M2 0.8 H5.2 L7 2.6 V7 H2 Z" fill="#c9eef6" stroke="#3fb9d6" stroke-width="0.7"/><path d="M2 2.4 C0.4 3.6 0.4 5.6 2 7" fill="none" stroke="#3fb9d6" stroke-width="0.7"/></svg>
<svg style="left:22px;top:241.2px" width="9" height="8" viewBox="0 0 9 8"><path d="M5.2 0.9 L8.2 3.9 L5.2 6.9 L2.2 3.9 Z" fill="#e1f2d6" stroke="#74b84e" stroke-width="0.8" stroke-linejoin="round"/><path d="M3.8 0.9 L6.8 3.9 L3.8 6.9 L0.8 3.9 Z" fill="#e1f2d6" stroke="#74b84e" stroke-width="0.9" stroke-linejoin="round"/></svg>
<svg style="left:22.5px;top:257.2px" width="8" height="8" viewBox="0 0 8 8"><path d="M1.8 0.8 H7 V4.6 H4.8 L1.8 7 Z" fill="#fbe3f2" stroke="#cf3fa2" stroke-width="1" stroke-linejoin="round"/><path d="M1.6 2 C0.2 3.4 0.2 5.4 1.6 7" fill="none" stroke="#a04cc0" stroke-width="0.8"/></svg>
<svg style="left:22.5px;top:273.3px" width="7.4" height="7.4" viewBox="0 0 7.4 7.4"><circle cx="3.7" cy="3.7" r="3.2" fill="#ebe3f7" stroke="#8b63c7" stroke-width="1"/><path d="M1 3.9 H4.2 L6 2 M4.2 3.9 L5.6 6" stroke="#8b63c7" stroke-width="0.8" fill="none"/></svg>
<svg style="left:335.8px;top:69.6px" width="3.6" height="2.2" viewBox="0 0 3.6 2.2"><path d="M0 0 H3.6 L1.8 2.2 Z" fill="#777"/></svg>
<svg style="left:343.6px;top:68.4px" width="4.6" height="4.6" viewBox="0 0 4.6 4.6"><path d="M0.4 0.4 L4.2 4.2 M4.2 0.4 L0.4 4.2" stroke="#999" stroke-width="0.7"/></svg>
<svg style="left:339.8px;top:80.8px" width="7" height="7" viewBox="0 0 7 7"><circle cx="2.8" cy="2.8" r="2.1" fill="none" stroke="#777" stroke-width="0.7"/><path d="M4.4 4.4 L6.4 6.4" stroke="#777" stroke-width="0.8"/></svg>
<svg style="left:336.5px;top:424.5px" width="8" height="8" viewBox="0 0 8 8"><path d="M4 0.8 H1.6 Q0.8 0.8 0.8 1.6 V6.2 Q0.8 7 1.6 7 H6.2 Q7 7 7 6.2 V4" fill="none" stroke="#3b8fd6" stroke-width="0.8"/><path d="M4.6 0.6 H7.2 V3.2 M7.2 0.6 L3.8 4" fill="none" stroke="#3b8fd6" stroke-width="0.8"/></svg>
<svg style="left:3.6px;top:299.5px" width="3" height="4" viewBox="0 0 3 4"><path d="M2.4 0.4 L0.6 2 L2.4 3.6 Z" fill="#999"/></svg>
<svg style="left:356px;top:67.2px" width="6.4" height="6.6" viewBox="0 0 6.4 6.6"><path d="M0.5 0.4 H4 L5.8 2.2 V6.1 H0.5 Z" fill="#a8e3f0" stroke="#3fb9d6" stroke-width="0.7"/><path d="M1.5 3.8 H4.6" stroke="#fff" stroke-width="0.6"/></svg>
<svg style="left:414.2px;top:69.6px" width="3.6" height="2.2" viewBox="0 0 3.6 2.2"><path d="M0 0 H3.6 L1.8 2.2 Z" fill="#6a6a6a"/></svg>
<svg style="left:422.2px;top:68.2px" width="4.8" height="4.8" viewBox="0 0 4.8 4.8"><path d="M0.4 0.4 L4.4 4.4 M4.4 0.4 L0.4 4.4" stroke="#999" stroke-width="0.7"/></svg>
<svg style="left:365px;top:83px" width="11" height="11" viewBox="0 0 11 11"><circle cx="5.4" cy="5.3" r="4.9" fill="#f4f4f4" stroke="#d0d0d0" stroke-width="0.7"/><path d="M4.2 4 V5.6 M6.4 4 V5.6" stroke="#c8c8c8" stroke-width="1"/></svg>
<svg style="left:396.5px;top:82.5px" width="14" height="13" viewBox="0 0 14 13"><path d="M7.6 0.6 L12.6 4 L9.6 8.6 L4.6 5.2 Z" fill="#e4f3da" stroke="#79bb53" stroke-width="0.8"/><circle cx="4.8" cy="8" r="3.7" fill="#121212"/><path d="M4.8 5.9 V10.1 M2.7 8 H6.9" stroke="#fff" stroke-width="0.9"/></svg>
<svg style="left:422px;top:84.5px" width="13.5" height="8" viewBox="0 0 13.5 8"><rect x="0.6" y="1.6" width="12" height="4.6" fill="#f1f8ec" stroke="#9a9f98" stroke-width="0.7"/><path d="M6.6 0.4 L9.8 3.9 L6.6 7.4 L3.4 3.9 Z" fill="#e4f3da" stroke="#79bb53" stroke-width="0.8"/></svg>
<svg style="left:445.5px;top:83px" width="13" height="11" viewBox="0 0 13 11"><path d="M1.2 1 H7 L11.8 5.6 L7.4 10 L1.2 4.8 Z" fill="#f1f1f1" stroke="#d2d2d2" stroke-width="0.8"/><path d="M2 1.6 H5.4" stroke="#c6c6c6" stroke-width="0.8"/></svg>
<svg style="left:477px;top:82.5px" width="12" height="11.5" viewBox="0 0 12 11.5"><path d="M3.6 0.6 H7.8 Q11 0.6 11 3.8 V5 Q11 8.2 7.8 8.2 H6.2 L3.8 10.8 V8.2 H3.6 Q0.5 8.2 0.5 5 V3.8 Q0.5 0.6 3.6 0.6 Z" fill="#f7e49a" stroke="#efd062" stroke-width="0.8"/><path d="M4.2 3.4 H7.4 M4.2 5.2 H6.4" stroke="#eac450" stroke-width="0.8"/></svg>
<svg style="left:508px;top:83.5px" width="12" height="10" viewBox="0 0 12 10"><rect x="0.6" y="1.6" width="4.4" height="6.4" rx="1" fill="#f2f2f2" stroke="#9a9a9a" stroke-width="0.8"/><rect x="6.8" y="1.6" width="4.4" height="6.4" rx="1" fill="#f2f2f2" stroke="#9a9a9a" stroke-width="0.8"/><path d="M6 0 V9.6" stroke="#4a8fd4" stroke-width="1.4"/></svg>
<svg style="left:535px;top:84.3px" width="8.4" height="8.4" viewBox="0 0 8.4 8.4"><path d="M0.6 0.6 L7.8 7.8 M7.8 0.6 L0.6 7.8" stroke="#e0464c" stroke-width="0.9"/></svg>
<svg style="left:560px;top:83px" width="10" height="10" viewBox="0 0 10 10"><circle cx="4.3" cy="4" r="3.5" fill="none" stroke="#5c5c5c" stroke-width="0.95"/><path d="M6.9 6.6 L9.8 9.5" stroke="#5c5c5c" stroke-width="1.1"/></svg>
<svg style="left:586.5px;top:82.5px" width="10" height="12" viewBox="0 0 10 12"><path d="M0.7 0.6 H5 L7.6 3.2 V10.6 H0.7 Z" fill="#fff" stroke="#2f7fd0" stroke-width="1.15"/><path d="M4.4 9.8 L9 5.2 L9.8 6 L5.2 10.6 Z" fill="#2f7fd0" stroke="#2f7fd0" stroke-width="0.6"/></svg>
<svg style="left:609px;top:83.2px" width="12.5" height="11" viewBox="0 0 12.5 11"><rect x="1.8" y="0.6" width="10" height="7.8" rx="0.8" fill="#f6f6f6" stroke="#6e6e6e" stroke-width="1"/><path d="M5.2 6.8 V4.4 M7 6.8 V2.6 M8.8 6.8 V3.6 M10.4 6.8 V2.2" stroke="#666" stroke-width="0.8"/><circle cx="2.6" cy="7.4" r="2" fill="#eaf3fc" stroke="#3f8ad6" stroke-width="0.8"/><path d="M4 9 L5.2 10.4" stroke="#3f8ad6" stroke-width="0.8"/></svg>
<svg style="left:624.7px;top:87.8px" width="2.6" height="1.6" viewBox="0 0 2.6 1.6"><path d="M0 0 H2.6 L1.3 1.6 Z" fill="#555"/></svg>
<svg style="left:637px;top:83px" width="11" height="11" viewBox="0 0 11 11"><path d="M1 0.6 V2.4 Q1 3.6 2.2 3.8 V8.8 Q2.2 10 3.2 10 Q4.2 10 4.2 8.8 V3.8 Q5.4 3.6 5.4 2.4 V0.6" fill="#e6f1fb" stroke="#3f8ad6" stroke-width="1.1"/><path d="M8.4 0.6 V5.4 M7.4 5.4 H9.4 V9 Q9.4 10 8.4 10 Q7.4 10 7.4 9 Z" fill="#e6f1fb" stroke="#3f8ad6" stroke-width="1.1"/></svg>
<svg style="left:651.4000000000001px;top:87.8px" width="2.6" height="1.6" viewBox="0 0 2.6 1.6"><path d="M0 0 H2.6 L1.3 1.6 Z" fill="#555"/></svg>
<svg style="left:662px;top:83.4px" width="13" height="11" viewBox="0 0 13 11"><rect x="0.6" y="0.6" width="10.6" height="8.6" rx="1.4" fill="#fdfdfd" stroke="#3f8ad6" stroke-width="1.15"/><circle cx="9.6" cy="7.8" r="2.9" fill="#151515"/><path d="M9.6 6.4 V9 M8.6 8.2 L9.6 9.2 L10.6 8.2" stroke="#fff" stroke-width="0.6" fill="none"/></svg>
<svg style="left:677.5px;top:87.8px" width="2.6" height="1.6" viewBox="0 0 2.6 1.6"><path d="M0 0 H2.6 L1.3 1.6 Z" fill="#555"/></svg>
<svg style="left:688.5px;top:84px" width="13" height="9" viewBox="0 0 13 9"><path d="M0.5 4.2 Q6.2 -2.4 12 4.2 Q6.2 10.8 0.5 4.2 Z" fill="#f3f8fd" stroke="#4b93da" stroke-width="0.8"/><circle cx="6.2" cy="4.2" r="2" fill="none" stroke="#4b93da" stroke-width="0.8"/></svg>
<svg style="left:703.1px;top:87.8px" width="2.6" height="1.6" viewBox="0 0 2.6 1.6"><path d="M0 0 H2.6 L1.3 1.6 Z" fill="#555"/></svg>
<svg style="left:787.8px;top:191.8px" width="4.4" height="4.4" viewBox="0 0 4.4 4.4"><path d="M2.2 0.3 L4.1 2.2 L2.2 4.1 L0.3 2.2 Z" fill="#e6f4dd" stroke="#7dbd55" stroke-width="0.6"/></svg>
<svg style="left:637.6px;top:183.6px" width="6" height="7" viewBox="0 0 6 7"><circle cx="2.8" cy="2.6" r="2" fill="#fff" stroke="#3b78c4" stroke-width="0.8"/><path d="M2.8 4.6 V6.6" stroke="#3b78c4" stroke-width="0.8"/></svg>
<svg style="left:703.6px;top:267px" width="6" height="7" viewBox="0 0 6 7"><circle cx="2.9" cy="4.2" r="2" fill="#fff" stroke="#3b78c4" stroke-width="0.8"/><path d="M2.9 0.4 V2.2" stroke="#3b78c4" stroke-width="0.8"/></svg>
<svg style="left:1013.6px;top:112.6px" width="5.4" height="3.4" viewBox="0 0 5.4 3.4"><path d="M0.4 3 L2.7 0.6 L5 3" fill="none" stroke="#b5b5b5" stroke-width="0.8"/></svg>
<svg style="left:97.42999999999999px;top:186.13px" width="7.74" height="7.74" viewBox="0 0 9 9"><circle cx="4.5" cy="4.5" r="3.6" fill="#fbd9a5" stroke="#ee8a4a" stroke-width="0.7"/><path d="M3.4 3.6 V5.2 M5.4 3.6 V5.2" stroke="#d9463a" stroke-width="0.9"/></svg>
<svg style="left:97.42999999999999px;top:199.63px" width="7.74" height="7.74" viewBox="0 0 9 9"><rect x="0.5" y="0.8" width="8" height="7.4" fill="#fbfbfb" stroke="#7c7c7c" stroke-width="0.8"/><rect x="0.5" y="0.8" width="8" height="1.4" fill="#9a9a9a"/><path d="M1.4 7.6 L4.5 3.6 L7.6 7.6 Z" fill="#dff2d6" stroke="#7ec35e" stroke-width="0.6"/></svg>
<svg style="left:97.42999999999999px;top:213.73px" width="7.74" height="7.74" viewBox="0 0 9 9"><circle cx="4.5" cy="4.5" r="3.5" fill="#e3d8f5" stroke="#8b63c7" stroke-width="0.8"/><path d="M1.6 4.7 H5 L7 2.8 M5 4.7 L6.4 7" stroke="#8b63c7" stroke-width="0.6" fill="none"/></svg>
<svg style="left:97.42999999999999px;top:227.63px" width="7.74" height="7.74" viewBox="0 0 9 9"><circle cx="4.5" cy="4.5" r="3.4" fill="#e9e9e9"/><path d="M3.2 5.8 L5.8 3.2" stroke="#9a9a9a" stroke-width="1.2"/></svg>
<svg style="left:97.42999999999999px;top:241.43px" width="7.74" height="7.74" viewBox="0 0 9 9"><path d="M3.4 0.6 H8.2 V4.2 L6.4 6.4 H3.4 Z" fill="#fbd3ec" stroke="#d048a8" stroke-width="0.7"/><circle cx="2.8" cy="6.2" r="2.5" fill="#151515"/><path d="M2.8 4.8 V7.6 M1.4 6.2 H4.2" stroke="#fff" stroke-width="0.7"/></svg>
<svg style="left:97.42999999999999px;top:257.43px" width="7.74" height="7.74" viewBox="0 0 9 9"><path d="M1.6 1 H7.4 Q8.4 1 8.4 2 V5.4 Q8.4 6.4 7.4 6.4 H5.4 L3.6 8.4 V6.4 H1.6 Q0.6 6.4 0.6 5.4 V2 Q0.6 1 1.6 1 Z" fill="#f7e08a" stroke="#ecc94a" stroke-width="0.7"/></svg>
<svg style="left:97.42999999999999px;top:271.63px" width="7.74" height="7.74" viewBox="0 0 9 9"><path d="M7.6 5.2 C8.4 2.4 6.2 0.8 4.2 1 C2 1.2 0.6 3 1 5 C1.4 6.8 3 7.8 4.4 7.4 C5.2 7.2 4.6 6 5.4 5.6 C6.2 5.2 7.2 6.2 7.6 5.2 Z" fill="#e8f2fc" stroke="#2f7fd0" stroke-width="0.9"/></svg>
<svg style="left:97.42999999999999px;top:288.13px" width="7.74" height="7.74" viewBox="0 0 9 9"><path d="M5.4 0.6 L8.4 3.4 L5.4 6.2 L2.6 3.4 Z" fill="#dff2d6" stroke="#7ec35e" stroke-width="0.7"/><circle cx="3" cy="6" r="2.6" fill="#151515"/><circle cx="3" cy="6" r="0.9" fill="#fff"/></svg>
<svg style="left:97.42999999999999px;top:301.73px" width="7.74" height="7.74" viewBox="0 0 9 9"><path d="M0.8 1.6 H3.6 L4.4 2.6 H8.2 V7.4 H0.8 Z" fill="#eaf3fc" stroke="#3f8ad6" stroke-width="0.9"/></svg>
<svg style="left:97.42999999999999px;top:315.63px" width="7.74" height="7.74" viewBox="0 0 9 9"><path d="M4.5 0.8 L8.2 4.5 L4.5 8.2 L0.8 4.5 Z" fill="#eef8e8" stroke="#a9d890" stroke-width="0.8"/><path d="M4.5 2.8 L6.2 4.5 L4.5 6.2 L2.8 4.5 Z" fill="#cfeabd"/></svg>
<svg style="left:97.42999999999999px;top:329.63px" width="7.74" height="7.74" viewBox="0 0 9 9"><path d="M5.4 0.6 L8.4 3.4 L5.4 6.2 L2.6 3.4 Z" fill="#dff2d6" stroke="#7ec35e" stroke-width="0.7"/><circle cx="3" cy="6" r="2.6" fill="#151515"/><circle cx="3" cy="6" r="0.9" fill="#fff"/><circle cx="7.6" cy="7.6" r="1" fill="#3f8ad6"/></svg>
<svg style="left:97.42999999999999px;top:345.93px" width="7.74" height="7.74" viewBox="0 0 9 9"><path d="M0.4 4.2 H4" stroke="#333" stroke-width="0.8"/><circle cx="5.6" cy="3.8" r="2.7" fill="#151515"/><circle cx="5.6" cy="3.8" r="0.9" fill="#fff"/><path d="M3 7 L4.4 8.2" stroke="#5aa0e0" stroke-width="0.7"/></svg>
<svg style="left:97.42999999999999px;top:359.73px" width="7.74" height="7.74" viewBox="0 0 9 9"><path d="M0.4 4.2 H4" stroke="#333" stroke-width="0.8"/><circle cx="5.6" cy="3.8" r="2.7" fill="#151515"/><circle cx="5.6" cy="3.8" r="0.9" fill="#fff"/><path d="M2.6 7 L4.6 8.2" stroke="#e05a6a" stroke-width="0.7"/></svg>
<svg style="left:97.42999999999999px;top:376.63px" width="7.74" height="7.74" viewBox="0 0 9 9"><ellipse cx="4.5" cy="4.5" rx="3.9" ry="2.9" fill="#e6f4dd" stroke="#7dbd55" stroke-width="0.7"/><path d="M3.4 3.4 V5.6 M5.6 3.4 V5.6" stroke="#4e9a2e" stroke-width="0.8"/></svg>
<svg style="left:97.42999999999999px;top:390.33px" width="7.74" height="7.74" viewBox="0 0 9 9"><ellipse cx="4.5" cy="4.5" rx="3.9" ry="2.9" fill="#e6f4dd" stroke="#7dbd55" stroke-width="0.7"/><path d="M3.4 3.4 V5.6 M5.6 3.4 V5.6" stroke="#4e9a2e" stroke-width="0.8"/></svg>
<svg style="left:97.42999999999999px;top:406.83px" width="7.74" height="7.74" viewBox="0 0 9 9"><rect x="0.6" y="0.8" width="7.8" height="7" rx="0.6" fill="#eef5fc" stroke="#7aa7d6" stroke-width="0.8"/><path d="M2.4 6.8 V4.6 M4.2 6.8 V3 M6 6.8 V4 M7.4 6.8 V2.4" stroke="#3f8ad6" stroke-width="0.8"/></svg>
<svg style="left:97.42999999999999px;top:423.43px" width="7.74" height="7.74" viewBox="0 0 9 9"><path d="M2.2 0.8 H5.4 L7.2 2.6 V8 H2.2 Z" fill="#eaf3fc" stroke="#2f7fd0" stroke-width="1"/><path d="M2.2 2 V8" stroke="#2f7fd0" stroke-width="1.6"/></svg>
<svg style="left:97.42999999999999px;top:436.83px" width="7.74" height="7.74" viewBox="0 0 9 9"><path d="M3.6 1.2 L8 4.2 L5.6 7.8 L1.4 4.8 Z" fill="#eef8e8" stroke="#7dbd55" stroke-width="0.8"/><path d="M0.8 0.8 L3 2.6" stroke="#4e9a2e" stroke-width="0.9"/></svg>
<svg style="left:97.42999999999999px;top:450.63px" width="7.74" height="7.74" viewBox="0 0 9 9"><rect x="0.6" y="2" width="3.4" height="5" rx="0.8" fill="#eee" stroke="#9a9a9a" stroke-width="0.7"/><rect x="5.2" y="2" width="3.2" height="5" rx="0.8" fill="#eee" stroke="#9a9a9a" stroke-width="0.7"/><path d="M4.6 0.8 V8.2" stroke="#4a8fd4" stroke-width="1.2"/></svg>
<svg style="left:97.42999999999999px;top:464.53px" width="7.74" height="7.74" viewBox="0 0 9 9"><path d="M1.2 1.2 L7.8 7.8 M7.8 1.2 L1.2 7.8" stroke="#e0464c" stroke-width="0.8"/></svg>
</div></div></body></html>
